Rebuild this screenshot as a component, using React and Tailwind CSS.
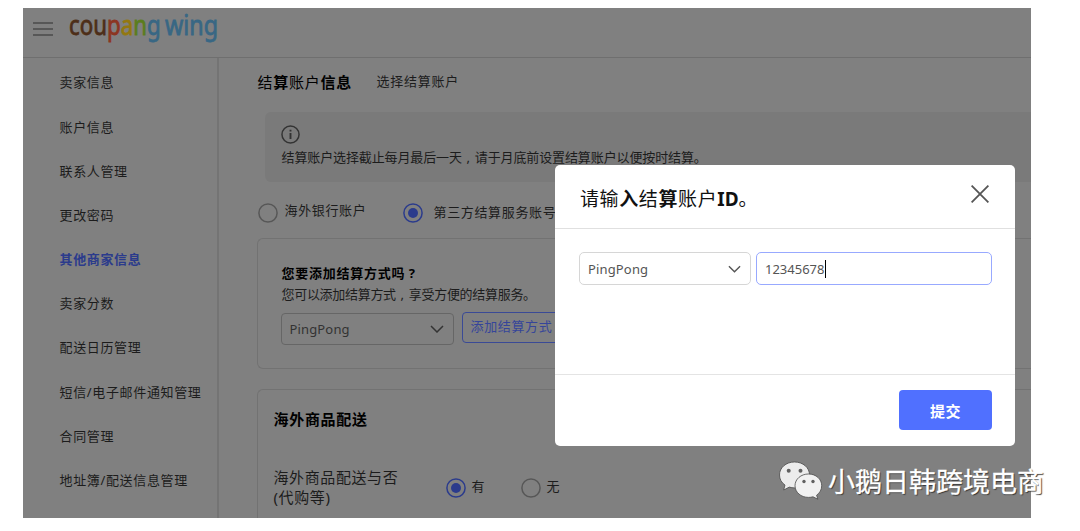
import React from "react";

const MENU = [
  "卖家信息",
  "账户信息",
  "联系人管理",
  "更改密码",
  "其他商家信息",
  "卖家分数",
  "配送日历管理",
  "短信/电子邮件通知管理",
  "合同管理",
  "地址簿/配送信息管理",
];

function Chevron({ className }) {
  return (
    <svg viewBox="0 0 14 8" className={className} fill="none" stroke="currentColor" strokeWidth="1.5">
      <path d="M1 1l6 6 6-6" />
    </svg>
  );
}

function Radio({ checked }) {
  return (
    <svg
      viewBox="0 0 20 20"
      className={checked ? "size-5 shrink-0 text-[#2b3b8c]" : "size-5 shrink-0 text-[#575757]"}
    >
      <circle cx="10" cy="10" r="9.100" fill="none" stroke="currentColor" strokeWidth="1.500" />
      {checked && <circle cx="10" cy="10" r="5" fill="currentColor" />}
    </svg>
  );
}

function Mark({ children }) {
  return <span className="inline-block w-[13px] text-center tracking-normal">{children}</span>;
}

function Logo() {
  return (
    <div className="ml-[16px] mt-[-2px] flex h-[40px] font-['Noto_Sans'] text-[27px] leading-[38px] [-webkit-text-stroke:0.8px]">
      <div className="w-[96px] shrink-0">
        <div className="flex w-max origin-left scale-x-[0.825]">
          <span className="text-[#4d2e18]">cou</span>
          <span className="text-[#8c3522]">p</span>
          <span className="text-[#94780f]">a</span>
          <span className="text-[#5b7d1e]">n</span>
          <span className="text-[#386784]">g</span>
        </div>
      </div>
      <div className="w-max origin-left scale-x-[0.862] text-[#386784]">wing</div>
    </div>
  );
}

function Header() {
  return (
    <header className="flex h-[50px] shrink-0 border-b border-[#6f6f6f] pl-[10px]">
      <svg viewBox="0 0 20 14" className="mt-[14.500px] h-[14px] w-5 shrink-0" stroke="#4a4a4a" strokeWidth="1.300">
        <path d="M0 1h20M0 7h20M0 13h20" />
      </svg>
      <Logo />
    </header>
  );
}

function Sidebar() {
  return (
    <nav className="flex w-[196px] shrink-0 flex-col border-r-2 border-[#747474] pl-[37px] pt-[3.500px] text-[13px] tracking-[0.65px]">
      {MENU.map((label) => (
        <a
          key={label}
          className={
            label === "其他商家信息"
              ? "flex h-[44.200px] shrink-0 items-center font-bold text-[#2b3b8c]"
              : "flex h-[44.200px] shrink-0 items-center text-[#1c1c1c]"
          }
        >
          {label}
        </a>
      ))}
    </nav>
  );
}

function Content() {
  return (
    <main className="min-w-0 flex-1 pl-[39px] text-[#1c1c1c]">
      <div className="flex h-[54px] items-center">
        <h1 className="flex w-[119px] pb-[5px] text-[15px] tracking-[0.75px] text-black">
          <span>结</span>
          <span className="font-bold">算</span>
          <span>账户</span>
          <span className="font-bold">信息</span>
        </h1>
        <span className="pb-[5px] text-[13px] tracking-[0.75px]">选择结算账户</span>
      </div>

      <div className="ml-[7px] flex h-[70px] flex-col rounded-l-md bg-[#7a7a7a] pl-[17px] pt-[13px]">
        <svg viewBox="0 0 18 18" className="-ml-px size-[19px] shrink-0" fill="none" stroke="#333" strokeWidth="1.400">
          <circle cx="9" cy="9" r="8.100" />
          <path d="M9 7.500v5.700M9 4.400v1.800" strokeWidth="1.800" />
        </svg>
        <p className="mt-[4px] text-[13px] leading-[18px] tracking-[-0.12px]">
          结算账户选择截止每月最后一天<Mark>,</Mark>请于月底前设置结算账户以便按时结算。
        </p>
      </div>

      <div className="flex h-[56px] items-center pt-[7px] text-[13px] tracking-[0.65px]">
        <Radio />
        <span className="ml-[7px] w-[118px] pb-1">海外银行账户</span>
        <Radio checked />
        <span className="ml-[11px]">第三方结算服务账号</span>
      </div>

      <section className="-ml-px h-[131px] rounded-l-md border border-r-0 border-[#727272] pl-6 pt-6">
        <h2 className="text-[13px] font-bold leading-[20px] tracking-[0.75px] text-black">
          您要添加结算方式吗<Mark>?</Mark>
        </h2>
        <p className="pt-px text-[13px] leading-[20px] tracking-[-0.3px]">
          您可以添加结算方式<Mark>,</Mark>享受方便的结算服务。
        </p>
        <div className="-ml-px mt-[9px] flex gap-2">
          <div className="flex h-[32px] w-[173px] items-center justify-between rounded border border-[#666] pl-2 pr-[9px] font-['Noto_Sans'] text-[13px] tracking-[0.15px] text-[#333]">
            <span className="pt-0.5">PingPong</span>
            <Chevron className="h-[8px] w-[14px]" />
          </div>
          <div className="-mt-px flex h-[31px] w-[120px] items-center rounded border border-[#3a4a96] pb-px pl-[8px] text-[13px] tracking-[0.65px] text-[#35459a]">
            添加结算方式
          </div>
        </div>
      </section>

      <section className="-ml-px mt-5 h-[140px] rounded-tl-md border border-b-0 border-r-0 border-[#727272] pl-[16px] pt-[18px]">
        <h2 className="text-[15px] font-bold leading-[22px] tracking-[0.7px] text-black">海外商品配送</h2>
        <div className="mt-[37px] flex text-[15px] leading-[20.5px] tracking-[0.6px]">
          <div className="w-[172px]">
            海外商品配送与否
            <br />
            (代购等)
          </div>
          <div className="flex h-[41px] items-center pt-px text-[13px]">
            <Radio checked />
            <span className="ml-[6px] w-[49px] pb-0.5">有</span>
            <Radio />
            <span className="ml-[6px] pb-0.5">无</span>
          </div>
        </div>
      </section>
    </main>
  );
}

function Dialog() {
  return (
    <div className="absolute left-[555px] top-[165px] flex h-[281px] w-[460px] flex-col rounded-[5px] bg-white">
      <div className="flex h-[64px] items-center justify-between border-b border-[#e0e0e0] pl-[25px] pr-[26px]">
        <h2 className="flex pt-[5px] text-[19px] tracking-[0.6px] text-[#111]">
          <span>请输</span>
          <span className="font-bold">入</span>
          <span>结</span>
          <span className="font-bold">算</span>
          <span>账户</span>
          <span className="font-['Noto_Sans'] font-bold tracking-normal">ID</span>
          <span>。</span>
        </h2>
        <svg viewBox="0 0 18 18" className="mb-1.5 size-[18px]" fill="none" stroke="#555" strokeWidth="1.8">
          <path d="M0.6 0.6l16.8 16.8M17.4 0.6L0.6 17.4" />
        </svg>
      </div>
      <div className="flex flex-1 gap-[5px] pl-6 pt-[23px] font-['Noto_Sans'] text-[13px] text-[#555]">
        <div className="flex h-[33px] w-[172px] items-center justify-between rounded-[5px] border border-[#d6d6d6] pl-2 pr-[9px] tracking-[0.15px]">
          <span className="pt-0.5">PingPong</span>
          <Chevron className="h-[8px] w-[13px]" />
        </div>
        <div className="flex h-[33px] w-[236px] items-center rounded-[5px] border border-[#98a9ff] pl-2">
          <span className="pt-0.5">12345678</span>
          <span className="h-[18px] w-px bg-black" />
        </div>
      </div>
      <div className="flex h-[72px] justify-end border-t border-[#e4e4e4] pr-[23px] pt-[15px]">
        <button className="h-[40px] w-[93px] rounded bg-[#5070ff] pt-0.5 text-[15px] font-bold tracking-[0.4px] text-white">
          提交
        </button>
      </div>
    </div>
  );
}

function Watermark() {
  return (
    <div className="absolute left-[779px] top-[460px] flex items-start">
      <svg viewBox="0 0 44 40" className="h-[40px] w-[44px]">
        <g stroke="#4a4a4a" strokeWidth="0.8">
          <path
            d="M15.5 2C7 2 .5 7.700.5 15c0 4.200 2.100 7.700 5.500 10.100L4.700 30l5.600-2.900c1.700.5 3.400.8 5.200.8 8.500 0 15-5.700 15-13S24 2 15.500 2z"
            fill="#ececec"
          />
          <path
            d="M29.500 14C22 14 16 19.100 16 25.700s6 11.700 13.500 11.700c1.600 0 3.100-.2 4.500-.6l4.800 2.400-1.200-4c3.200-2.200 5.100-5.600 5.100-9.500C42.700 19.100 37 14 29.500 14z"
            fill="#f1f1f1"
          />
        </g>
        <g fill="#606060">
          <circle cx="9.700" cy="10.800" r="2" />
          <circle cx="21.500" cy="10.800" r="2" />
          <circle cx="25" cy="21.500" r="1.700" />
          <circle cx="34" cy="21.500" r="1.700" />
        </g>
      </svg>
      <span className="ml-[5px] whitespace-nowrap pt-[2px] text-[27px] leading-[40px] text-white [-webkit-text-stroke:0.3px_white] [text-shadow:1px_1px_1px_#333]">
        小鹅日韩跨境电商
      </span>
    </div>
  );
}

export default function App() {
  return (
    <div className="relative h-[531px] w-[1080px] overflow-hidden bg-white pl-[22.5px] pt-[7.5px] font-['Noto_Sans','Noto_Sans_CJK_SC',sans-serif]">
      <div className="flex h-[510.500px] w-[1008px] flex-col overflow-hidden whitespace-nowrap bg-[#808080]">
        <Header />
        <div className="flex min-h-0 flex-1">
          <Sidebar />
          <Content />
        </div>
      </div>
      <Dialog />
      <Watermark />
    </div>
  );
}
